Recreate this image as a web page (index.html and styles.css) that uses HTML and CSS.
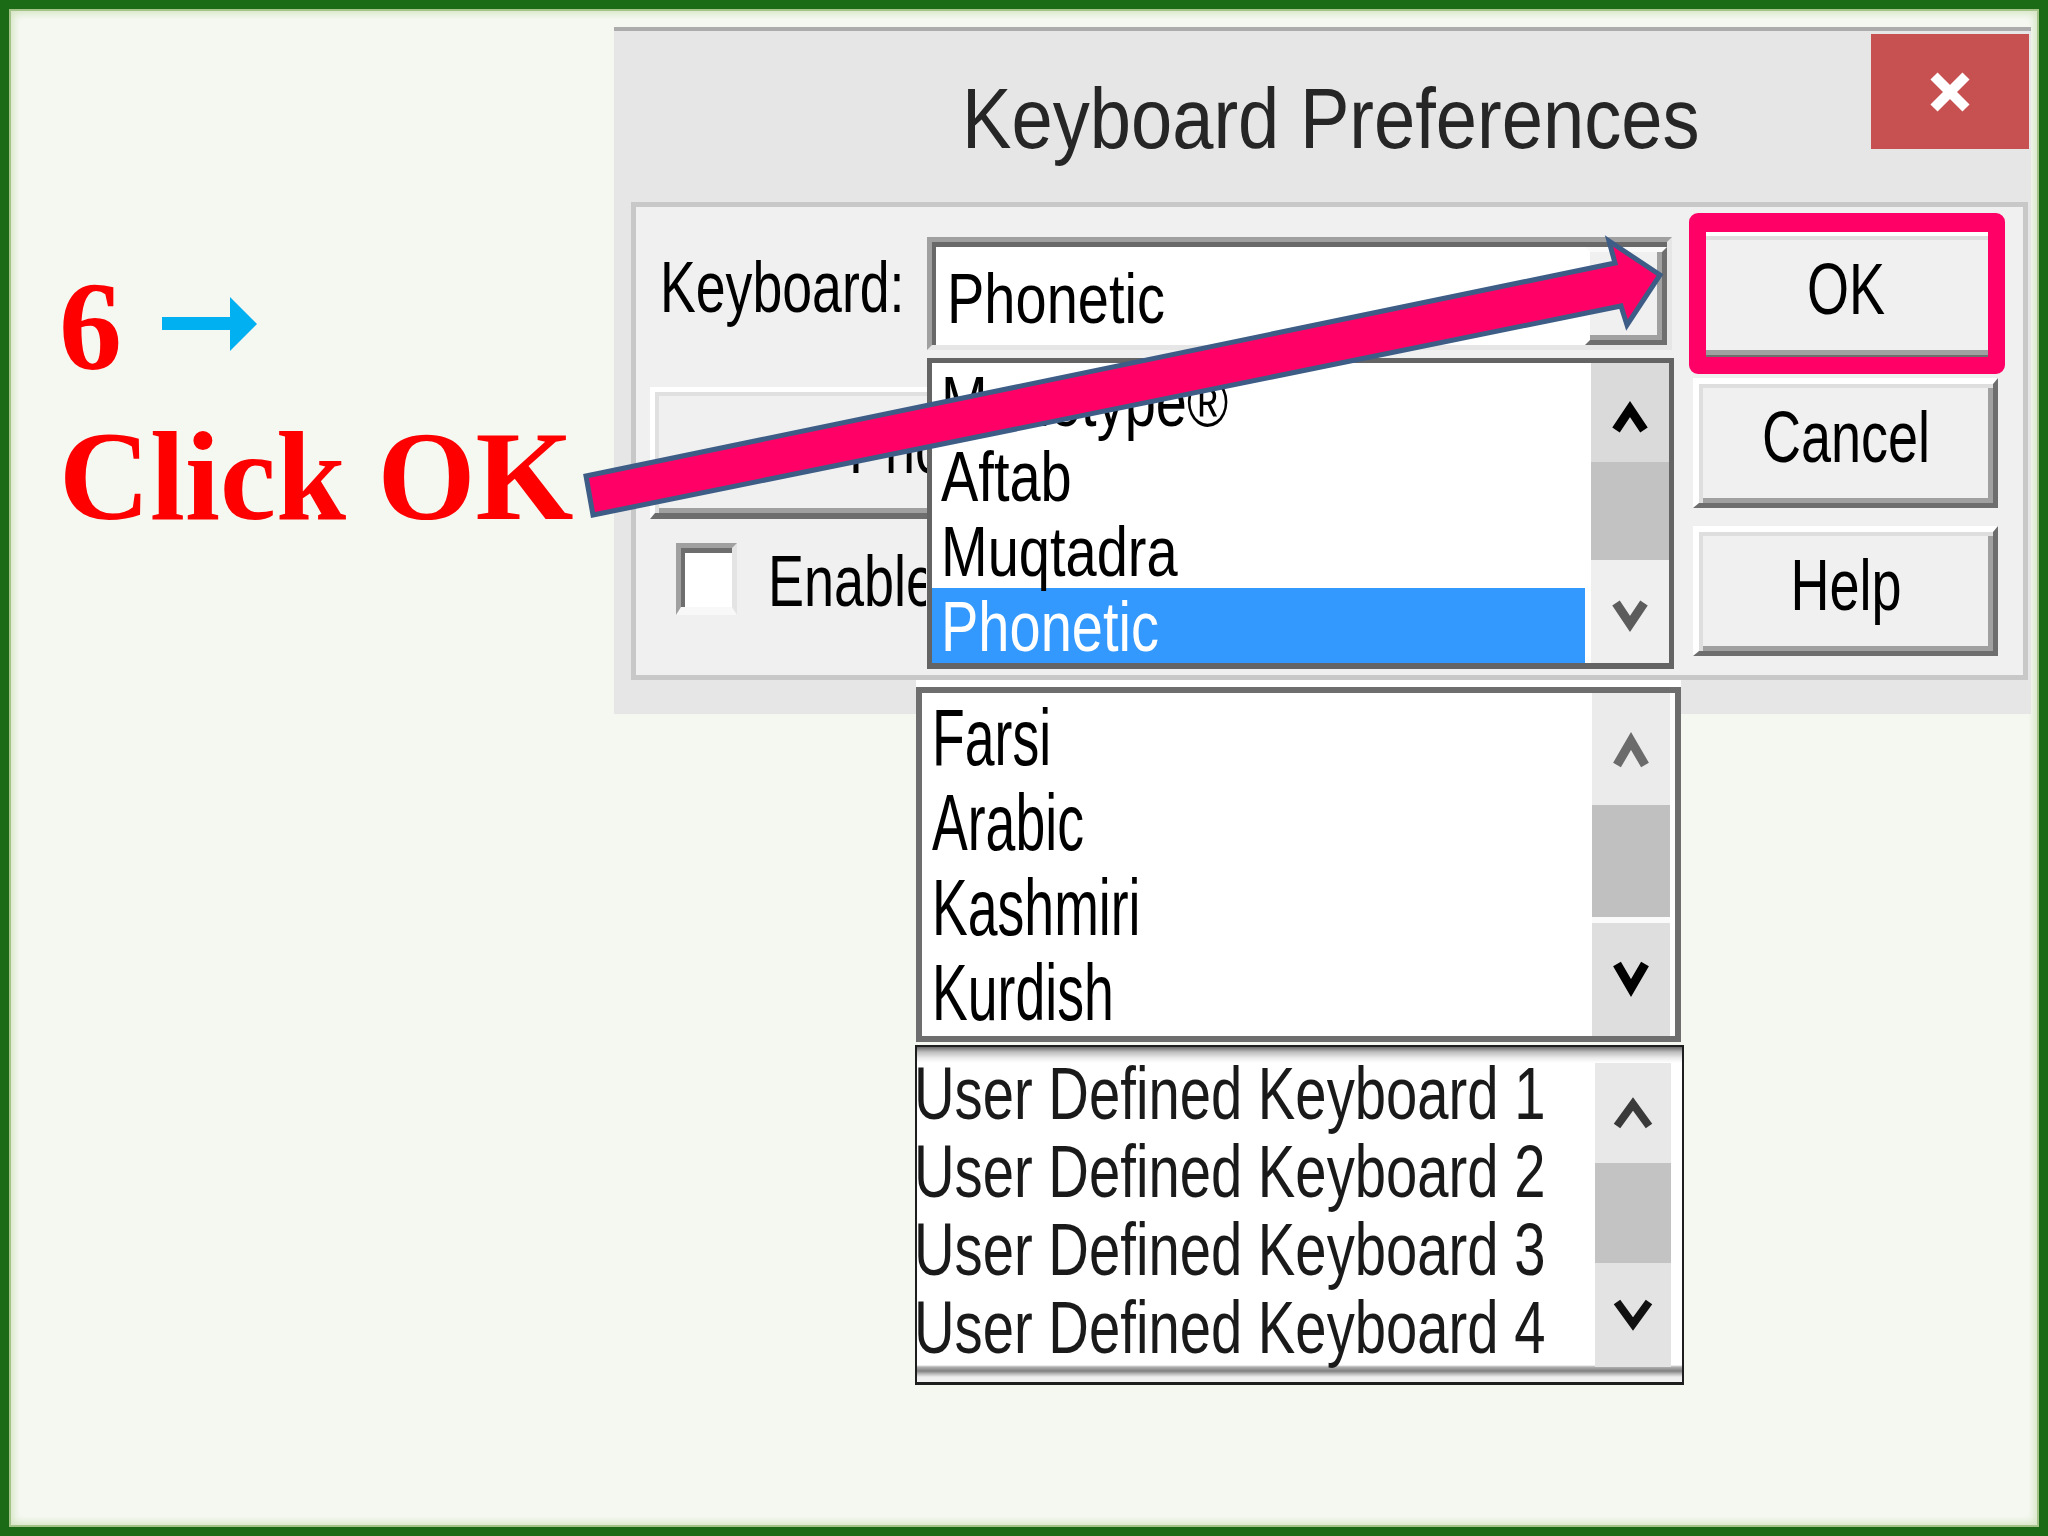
FILE: index.html
```html
<!DOCTYPE html>
<html>
<head>
<meta charset="utf-8">
<title>Keyboard Preferences - Click OK</title>
<link rel="stylesheet" href="styles.css">
</head>
<body>
<div class="slide">
  <div class="caption">
    <div class="step"><span class="num">6</span><svg class="step-arrow" width="95" height="54" viewBox="0 0 95 54"><rect x="0" y="20" width="69" height="13" fill="#00b0f0"/><polygon points="68,0 95,27 68,54" fill="#00b0f0"/></svg></div>
    <div class="cta">Click OK</div>
  </div>

  <div class="stage">
    <div class="dialog">
      <div class="titlebar">
        <div class="title"><span class="t">Keyboard Preferences</span></div>
        <div class="close"><svg width="42" height="42" viewBox="0 0 42 42"><path d="M5 5 L37 37 M37 5 L5 37" stroke="#fff" stroke-width="10" fill="none"/></svg></div>
      </div>
      <div class="group">
        <div class="main-col">
          <div class="kb-row">
            <div class="kb-label"><span class="t">Keyboard:</span></div>
            <div class="combo">
              <div class="combo-value"><span class="t">Phonetic</span></div>
              <div class="combo-btn"><svg width="30" height="26" viewBox="0 0 30 26"><path d="M3 4 L15 21 L27 4" fill="none" stroke="#000" stroke-width="7"/></svg></div>
              <div class="list1">
                <div class="items">
                  <div class="item"><span class="t">Monotype®</span></div>
                  <div class="item"><span class="t">Aftab</span></div>
                  <div class="item"><span class="t">Muqtadra</span></div>
                  <div class="item selected"><span class="t">Phonetic</span></div>
                </div>
                <div class="sb sb1">
                  <div class="zone up"><svg width="36" height="34" viewBox="0 0 36 34"><path d="M4 31 L18 10 L32 31" fill="none" stroke="#000" stroke-width="9"/></svg></div>
                  <div class="zone thumb"></div>
                  <div class="zone down"><svg width="36" height="34" viewBox="0 0 36 34"><path d="M4 3 L18 24 L32 3" fill="none" stroke="#5c5c5c" stroke-width="9"/></svg></div>
                </div>
              </div>
            </div>
          </div>
          <div class="wide-btn"><span class="clip wide-clip"><span class="t">Phonetic</span></span></div>
          <div class="check-row">
            <span class="checkbox"></span>
            <span class="clip check-label"><span class="t">Enable</span></span>
          </div>
        </div>
        <div class="btn-col">
          <div class="btn"><span class="t">OK</span></div>
          <div class="btn"><span class="t">Cancel</span></div>
          <div class="btn"><span class="t">Help</span></div>
          <div class="ok-ring"></div>
        </div>
      </div>
    </div>

    <div class="list2-wrap">
      <div class="list2">
        <div class="items">
          <div class="item"><span class="t">Farsi</span></div>
          <div class="item"><span class="t">Arabic</span></div>
          <div class="item"><span class="t">Kashmiri</span></div>
          <div class="item"><span class="t">Kurdish</span></div>
        </div>
        <div class="sb sb2">
          <div class="zone up"><svg width="36" height="40" viewBox="0 0 36 40"><path d="M4 36 L18 12 L32 36" fill="none" stroke="#6b6b6b" stroke-width="9"/></svg></div>
          <div class="zone thumb"></div>
          <div class="zone gap"></div>
          <div class="zone down"><svg width="36" height="40" viewBox="0 0 36 40"><path d="M4 4 L18 28 L32 4" fill="none" stroke="#000" stroke-width="9"/></svg></div>
        </div>
      </div>
    </div>

    <div class="list3">
      <div class="items">
        <div class="item"><span class="t">User Defined Keyboard 1</span></div>
        <div class="item"><span class="t">User Defined Keyboard 2</span></div>
        <div class="item"><span class="t">User Defined Keyboard 3</span></div>
        <div class="item"><span class="t">User Defined Keyboard 4</span></div>
      </div>
      <div class="sb sb3">
        <div class="zone up"><svg width="42" height="40" viewBox="0 0 42 40"><path d="M5 33 L21 11 L37 33" fill="none" stroke="#3a3a3a" stroke-width="8"/></svg></div>
        <div class="zone thumb"></div>
        <div class="zone down"><svg width="42" height="40" viewBox="0 0 42 40"><path d="M5 7 L21 29 L37 7" fill="none" stroke="#111" stroke-width="8"/></svg></div>
      </div>
    </div>
  </div>

  <svg class="pointer" width="2048" height="1536" viewBox="0 0 2048 1536">
    <polygon points="586,476 1615,263 1609,241 1660,275 1627,325 1621,306 593,515" fill="#ff0066" stroke="#3e5d86" stroke-width="5" stroke-linejoin="miter"/>
  </svg>
</div>
</body>
</html>
```

FILE: styles.css
```css
* { box-sizing: border-box; }

html, body {
  margin: 0;
  padding: 0;
}

body {
  width: 2048px;
  height: 1536px;
  overflow: hidden;
  background: #f5f8f1;
  font-family: "Liberation Sans", Arial, sans-serif;
}

.slide {
  position: relative;
  width: 2048px;
  height: 1536px;
  border: 9px solid #1a6a16;
  background: #f5f8f1;
  display: flex;
  align-items: flex-start;
  box-shadow: inset 0 0 0 2px #a3c388, inset 0 0 7px 5px #d7e6c6;
}

/* generic squeezed text (bitmap font look) */
.t {
  display: inline-block;
  white-space: nowrap;
  transform: scaleX(var(--sx, 0.75));
  transform-origin: 0 0;
}

.clip {
  display: inline-block;
  overflow: hidden;
  white-space: nowrap;
  vertical-align: top;
}

/* ---------- caption ---------- */
.caption {
  flex: 0 0 555px;
  margin-left: 50px;
  padding-top: 243px;
  font-family: "Liberation Serif", "Times New Roman", serif;
  font-weight: bold;
  color: #ff0000;
  font-size: 126px;
  line-height: 150px;
  white-space: nowrap;
}

.step-arrow {
  vertical-align: 18px;
  margin-left: 40px;
}

/* ---------- stage / dialog ---------- */
.stage {
  flex: 0 0 1417px;
  margin-top: 18px;
}

.dialog {
  height: 687px;
  border-top: 4px solid #acacac;
  background: #e6e6e6;
  font-size: 72px;
  line-height: 72px;
  color: #000;
}

.titlebar {
  height: 171px;
  display: flex;
  align-items: flex-start;
}

.title {
  flex: 1;
  padding-left: 348px;
  padding-top: 45px;
  font-size: 85px;
  line-height: 85px;
  color: #262626;
  white-space: nowrap;
}

.title .t { --sx: 0.872; }

.close {
  width: 158px;
  height: 115px;
  margin-top: 3px;
  margin-right: 2px;
  background: #c75050;
  display: flex;
  align-items: center;
  justify-content: center;
}

.group {
  height: 478px;
  margin: 0 3px 0 17px;
  border: 5px solid #c8c8c8;
  background: #f0f0f0;
  display: flex;
}

.main-col {
  flex: 1;
  min-width: 0;
  padding: 30px 0 0 14px;
}

.kb-row {
  display: flex;
  align-items: flex-start;
  height: 113px;
}

.kb-label {
  width: 277px;
  flex: 0 0 277px;
  padding: 14px 0 0 10px;
}

.kb-label .t { --sx: 0.745; }

.combo {
  position: relative;
  width: 745px;
  height: 113px;
  border: 5px solid;
  border-color: #a0a0a0 #e6e6e6 #e6e6e6 #a0a0a0;
  box-shadow: inset 4px 5px 0 #696969;
  background: #fff;
  display: flex;
}

.combo-value {
  flex: 1;
  padding: 21px 0 0 15px;
  font-size: 70px;
}

.combo-value .t { --sx: 0.8; }

.combo-btn {
  width: 82px;
  height: 98px;
  margin-top: 5px;
  border-style: solid;
  border-width: 5px;
  border-color: #fafafa #6e6e6e #6e6e6e #fff;
  box-shadow: inset -5px -5px 0 #a0a0a0;
  background: #f0f0f0;
  display: flex;
  align-items: center;
  justify-content: center;
  padding: 0 5px 5px 0;
}

/* first dropdown (open list over dialog) */
.list1 {
  position: absolute;
  left: -5px;
  top: 116px;
  z-index: 3;
  width: 747px;
  height: 311px;
  border: 5px solid #646464;
  border-bottom-width: 6px;
  background: #fff;
  display: flex;
}

.list1 .items {
  flex: 1;
  min-width: 0;
  overflow: hidden;
}

.list1 .item {
  height: 75px;
  padding: 4px 0 0 9px;
  font-size: 70px;
  line-height: 71px;
  white-space: nowrap;
}

.list1 .item .t { --sx: 0.8; }

.list1 .item.selected {
  background: #3399ff;
  color: #fff;
}

.sb {
  display: flex;
  flex-direction: column;
  flex: 0 0 auto;
}

.zone {
  display: flex;
  align-items: center;
  justify-content: center;
}

.sb1 {
  width: 78px;
  margin-left: 6px;
}

.sb1 .up { height: 99px; background: #dadada; padding-top: 6px; }
.sb1 .thumb { height: 98px; background: #c2c2c2; }
.sb1 .down { height: 103px; background: #efefef; padding-top: 10px; }

/* wide button partially hidden under the dropdown */
.wide-btn {
  width: 900px;
  height: 132px;
  margin-top: 37px;
  border-style: solid;
  border-width: 5px 6px 6px 5px;
  border-color: #fff #6e6e6e #6e6e6e #fff;
  box-shadow: inset 4px 4px 0 #e0e0e0, inset -5px -5px 0 #a0a0a0;
  background: #f0f0f0;
  padding: 20px 0 0 194px;
  white-space: nowrap;
}

.wide-clip {
  width: 78px;
  height: 76px;
}

.check-row {
  display: flex;
  align-items: flex-start;
  margin-top: 24px;
}

.checkbox {
  width: 61px;
  height: 72px;
  margin-left: 26px;
  border-style: solid;
  border-width: 5px 5px 8px 5px;
  border-color: #a0a0a0 #e4e4e4 #f8f8f8 #a0a0a0;
  box-shadow: inset 4px 5px 0 #6e6e6e;
  background: #fff;
}

.check-label {
  width: 158px;
  height: 76px;
  margin-left: 31px;
  margin-top: 2px;
}

/* right buttons */
.btn-col {
  position: relative;
  width: 305px;
  flex: 0 0 305px;
  margin-right: 25px;
  padding-top: 23px;
  display: flex;
  flex-direction: column;
  gap: 18px;
}

.btn {
  height: 130px;
  border-style: solid;
  border-width: 6px 5px 5px 6px;
  border-color: #fff #6e6e6e #6e6e6e #fff;
  box-shadow: inset 4px 4px 0 #dedede, inset -5px -5px 0 #a0a0a0;
  background: #f0f0f1;
  text-align: center;
  padding-top: 17px;
}

.btn .t {
  --sx: 0.75;
  transform-origin: 50% 0;
}

.ok-ring {
  position: absolute;
  left: -4px;
  top: 6px;
  z-index: 4;
  width: 316px;
  height: 161px;
  border: 17px solid #ff0066;
  border-top-width: 19px;
  border-radius: 9px;
}

/* second list */
.list2-wrap {
  position: relative;
  z-index: 1;
  width: 765px;
  margin: -34px 0 0 302px;
  padding-top: 7px;
  background: #fff;
}

.list2 {
  height: 355px;
  border: 6px solid #6e6e6e;
  background: #fff;
  display: flex;
}

.list2 .items {
  flex: 1;
  min-width: 0;
  padding: 2px 0 0 10px;
}

.list2 .item {
  height: 85px;
  font-size: 80px;
  line-height: 85px;
  white-space: nowrap;
}

.list2 .item .t { --sx: 0.67; }

.sb2 {
  width: 78px;
  margin-right: 5px;
}

.sb2 .up { height: 112px; background: #ebebeb; }
.sb2 .thumb { height: 112px; background: #c0c0c0; }
.sb2 .gap { height: 6px; background: #fafafa; }
.sb2 .down { height: 113px; background: #dedede; }

/* third list */
.list3 {
  position: relative;
  z-index: 1;
  width: 769px;
  height: 340px;
  margin: 3px 0 0 301px;
  border: 2px solid #1e1e1e;
  border-bottom-width: 3px;
  background: linear-gradient(to bottom,
    #6a6a6a 0px, #bdbdbd 5px, #ececec 11px, #fff 16px,
    #fff 318px, #b0b0b0 320px, #808080 324px, #bcbcbc 327px,
    #ededed 330px, #f4f4f4 335px);
  display: flex;
}

.list3 .items {
  flex: 1;
  min-width: 0;
  padding-top: 8px;
  margin-left: -3px;
  color: #1a1a1a;
  filter: blur(0.5px);
}

.list3 .item {
  height: 78px;
  font-size: 74px;
  line-height: 78px;
  white-space: nowrap;
}

.list3 .item .t { --sx: 0.76; }

.sb3 {
  width: 76px;
  margin: 16px 11px 15px 0;
}

.sb3 .up { height: 100px; background: #e8e8e8; }
.sb3 .thumb { height: 100px; background: #c3c3c3; }
.sb3 .down { height: 104px; background: #e3e3e3; }

/* annotation arrow */
.pointer {
  position: absolute;
  left: -9px;
  top: -9px;
  z-index: 10;
  pointer-events: none;
}
```
